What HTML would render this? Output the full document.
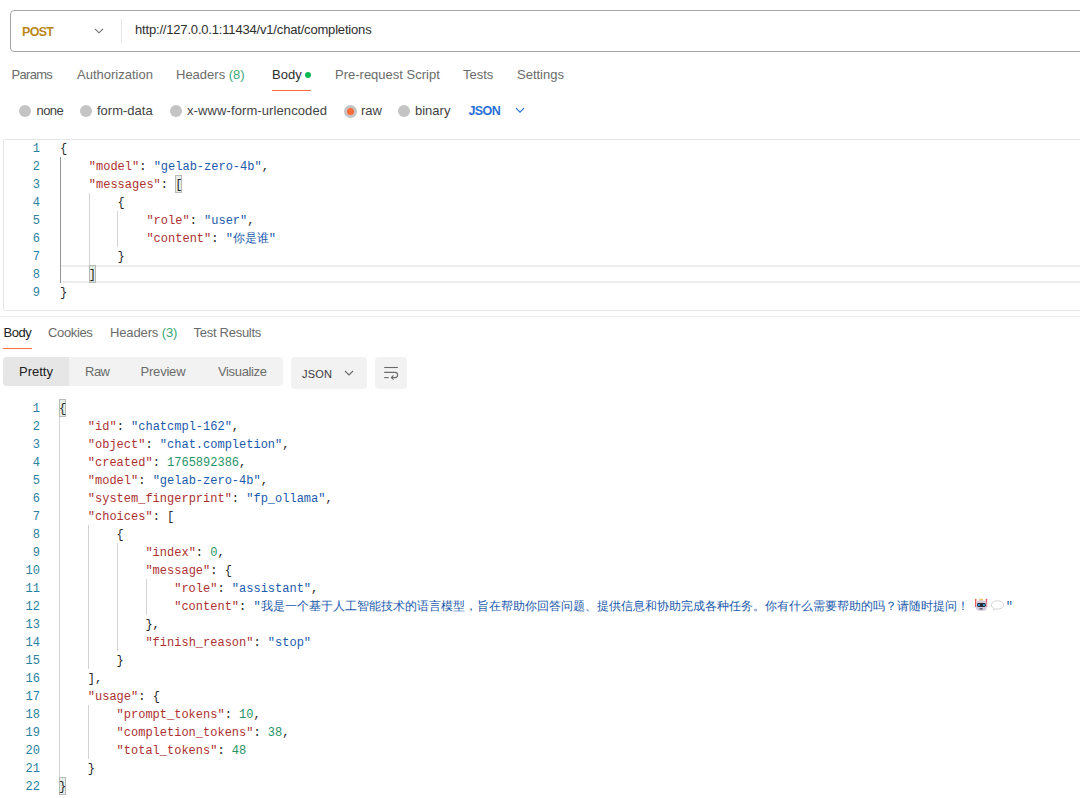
<!DOCTYPE html>
<html><head><meta charset="utf-8">
<style>
*{margin:0;padding:0;box-sizing:border-box}
html,body{width:1080px;height:798px;overflow:hidden;background:#fff}
body{position:relative;font-family:"Liberation Sans",sans-serif;font-size:13px;color:#212121}
.a{position:absolute;white-space:nowrap;line-height:16px}
.urlbox{position:absolute;left:10px;top:10px;width:1100px;height:42px;border:1px solid #a6a6a6;border-radius:4px}
.post{left:22px;top:23.5px;color:#bb8718;font-weight:700;font-size:12.5px;letter-spacing:-0.7px}
.divv{position:absolute;left:121px;top:19px;width:1px;height:24px;background:#e6e6e6}
.url{left:135px;top:21.5px;color:#2e2e2e;letter-spacing:-0.18px}
.tab{top:66.5px;color:#6b6b6b}
.tab .g{color:#3aa775}
.radio{position:absolute;top:105px;width:12px;height:12px;border-radius:50%;background:#c4c4c4}
.rl{top:102.5px;color:#444}
.ed{position:absolute;left:3px;top:139px;width:1100px;height:172px;border:1px solid #e6e6e6;border-radius:1.5px}
.sep{position:absolute;left:0;top:316px;width:1080px;height:1px;background:#ececec}
.code{position:absolute;left:0;font-family:"Liberation Mono",monospace;font-size:12px;line-height:18px;white-space:pre;color:#262626}
.ln{position:absolute;left:0;width:40px;text-align:right;font-family:"Liberation Mono",monospace;font-size:12px;line-height:18px;color:#2a80a0;white-space:pre}
.k{color:#ad3030}.s{color:#1a5aad}.n{color:#1f9468}
.guide{position:absolute;width:1px;background:#d3d3d3}
.bm{position:absolute;width:7px;height:18px;background:rgba(0,100,0,.1);border:1px solid #b9b9b9}
.cjk{display:inline-block;overflow:hidden;vertical-align:top;position:relative;top:-1px;height:18px;white-space:nowrap;font-family:"Liberation Sans",sans-serif;font-size:12px}
.c{display:inline-block;width:12px;font-style:normal;text-align:left;overflow:hidden;vertical-align:top}
.rtab{top:325px;color:#6b6b6b}
.seg{position:absolute;top:357px;height:29px;background:#f2f2f2;border-radius:4px}
.btn{position:absolute;top:357px;height:32px;background:#f2f2f2;border-radius:4px}
</style></head><body>
<div class="urlbox"></div>
<div class="a post">POST</div>
<svg style="position:absolute;left:94px;top:28px" width="10" height="6" viewBox="0 0 10 6"><path d="M1 0.8 L5 4.8 L9 0.8" fill="none" stroke="#6b6b6b" stroke-width="1.1"/></svg>
<div class="divv"></div>
<div class="a url">http://127.0.0.1:11434/v1/chat/completions</div>

<div class="a tab" style="left:11.5px;letter-spacing:-0.7px">Params</div>
<div class="a tab" style="left:77px">Authorization</div>
<div class="a tab" style="left:176px">Headers <span class="g">(8)</span></div>
<div class="a tab" style="left:272px;color:#2e2e2e">Body</div>
<div style="position:absolute;left:305px;top:71.5px;width:6px;height:6px;border-radius:50%;background:#0cbb52"></div>
<div style="position:absolute;left:272px;top:89.5px;width:39px;height:1.5px;background:#ff6c37"></div>
<div class="a tab" style="left:335px">Pre-request Script</div>
<div class="a tab" style="left:463px">Tests</div>
<div class="a tab" style="left:517px">Settings</div>

<div class="radio" style="left:19px"></div>
<div class="a rl" style="left:36.5px;letter-spacing:-0.6px">none</div>
<div class="radio" style="left:80px"></div>
<div class="a rl" style="left:97px">form-data</div>
<div class="radio" style="left:169.5px"></div>
<div class="a rl" style="left:187px;letter-spacing:0.1px">x-www-form-urlencoded</div>
<div class="radio" style="left:344px;top:104.5px;width:13px;height:13px"></div>
<div style="position:absolute;left:347px;top:107.5px;width:7px;height:7px;border-radius:50%;background:#ff6c37"></div>
<div class="a rl" style="left:361px">raw</div>
<div class="radio" style="left:398px"></div>
<div class="a rl" style="left:415px">binary</div>
<div class="a rl" style="left:468.5px;color:#2b6fd6;font-weight:700;font-size:12.5px;letter-spacing:-0.6px">JSON</div>
<svg style="position:absolute;left:515px;top:107px" width="10" height="7" viewBox="0 0 10 7"><path d="M1 1.2 L5 5.2 L9 1.2" fill="none" stroke="#2b6fd6" stroke-width="1.2"/></svg>

<!-- request editor -->
<div class="ed"></div>
<div style="position:absolute;left:60px;top:265px;width:1020px;height:18px;border-top:2px solid #eeeeee;border-bottom:2px solid #eeeeee"></div>
<div class="guide" style="left:60px;top:157px;height:126px;background:#939393"></div>
<div class="guide" style="left:89px;top:193px;height:72px"></div>
<div class="guide" style="left:117px;top:211px;height:36px"></div>
<div class="bm" style="left:175px;top:175px"></div>
<div class="bm" style="left:89px;top:265px"></div>
<div class="ln" style="top:140px">1
2
3
4
5
6
7
8
9</div>
<div class="code" style="left:60px;top:140px">{
    <span class="k">"model"</span>: <span class="s">"gelab-zero-4b"</span>,
    <span class="k">"messages"</span>: [
        {
            <span class="k">"role"</span>: <span class="s">"user"</span>,
            <span class="k">"content"</span>: <span class="s">"<span class="cjk" style="width:36px"><i class="c">你</i><i class="c">是</i><i class="c">谁</i></span>"</span>
        }
    ]
}</div>

<div class="sep"></div>
<div class="a rtab" style="left:3.5px;color:#212121;letter-spacing:-0.5px">Body</div>
<div style="position:absolute;left:3px;top:347.5px;width:29px;height:1.5px;background:#ff6c37"></div>
<div class="a rtab" style="left:48px;letter-spacing:-0.35px">Cookies</div>
<div class="a rtab" style="left:110px;letter-spacing:-0.13px">Headers <span style="color:#3aa775">(3)</span></div>
<div class="a rtab" style="left:193.5px;letter-spacing:-0.27px">Test Results</div>

<div class="seg" style="left:3px;width:280px"></div>
<div class="seg" style="left:3px;width:66px;background:#e6e6e6;border-radius:4px 0 0 4px"></div>
<div class="a" style="left:19px;top:364px;color:#212121">Pretty</div>
<div class="a" style="left:85px;top:364px;color:#6b6b6b;letter-spacing:-0.5px">Raw</div>
<div class="a" style="left:140.5px;top:364px;color:#6b6b6b;letter-spacing:-0.2px">Preview</div>
<div class="a" style="left:218px;top:364px;color:#6b6b6b;letter-spacing:-0.35px">Visualize</div>
<div class="btn" style="left:291px;width:76px"></div>
<div class="a" style="left:302px;top:365.5px;color:#3b3b3b;font-size:11px;letter-spacing:0.2px">JSON</div>
<svg style="position:absolute;left:344px;top:370px" width="10" height="7" viewBox="0 0 10 7"><path d="M1 1 L5 5 L9 1" fill="none" stroke="#6b6b6b" stroke-width="1.1"/></svg>
<div class="btn" style="left:375px;width:32px"></div>
<svg style="position:absolute;left:378px;top:360px" width="26" height="26" viewBox="0 0 26 26"><g fill="none" stroke="#6b6b6b" stroke-width="1.1"><path d="M6.2 7.5 H19.9"/><path d="M6.2 12.4 H17 A2.6 2.6 0 0 1 17 17.6 H13.6"/><path d="M6.2 17.6 H10.7"/><path d="M15.5 15.4 L13.4 17.6 L15.5 19.7"/></g></svg>

<!-- response editor -->
<div class="guide" style="left:59px;top:417px;height:360px"></div>
<div class="guide" style="left:88px;top:525px;height:144px"></div>
<div class="guide" style="left:88px;top:705px;height:54px"></div>
<div class="guide" style="left:117px;top:543px;height:108px"></div>
<div class="guide" style="left:146px;top:579px;height:36px"></div>
<div class="bm" style="left:59px;top:399px"></div>
<div class="bm" style="left:59px;top:777px"></div>
<div class="ln" style="top:400px">1
2
3
4
5
6
7
8
9
10
11
12
13
14
15
16
17
18
19
20
21
22</div>
<div class="code" style="left:59px;top:400px">{
    <span class="k">"id"</span>: <span class="s">"chatcmpl-162"</span>,
    <span class="k">"object"</span>: <span class="s">"chat.completion"</span>,
    <span class="k">"created"</span>: <span class="n">1765892386</span>,
    <span class="k">"model"</span>: <span class="s">"gelab-zero-4b"</span>,
    <span class="k">"system_fingerprint"</span>: <span class="s">"fp_ollama"</span>,
    <span class="k">"choices"</span>: [
        {
            <span class="k">"index"</span>: <span class="n">0</span>,
            <span class="k">"message"</span>: {
                <span class="k">"role"</span>: <span class="s">"assistant"</span>,
                <span class="k">"content"</span>: <span class="s">"<span class="cjk" style="width:707px"><i class="c">我</i><i class="c">是</i><i class="c">一</i><i class="c">个</i><i class="c">基</i><i class="c">于</i><i class="c">人</i><i class="c">工</i><i class="c">智</i><i class="c">能</i><i class="c">技</i><i class="c">术</i><i class="c">的</i><i class="c">语</i><i class="c">言</i><i class="c">模</i><i class="c">型</i><i class="c">，</i><i class="c">旨</i><i class="c">在</i><i class="c">帮</i><i class="c">助</i><i class="c">你</i><i class="c">回</i><i class="c">答</i><i class="c">问</i><i class="c">题</i><i class="c">、</i><i class="c">提</i><i class="c">供</i><i class="c">信</i><i class="c">息</i><i class="c">和</i><i class="c">协</i><i class="c">助</i><i class="c">完</i><i class="c">成</i><i class="c">各</i><i class="c">种</i><i class="c">任</i><i class="c">务</i><i class="c">。</i><i class="c">你</i><i class="c">有</i><i class="c">什</i><i class="c">么</i><i class="c">需</i><i class="c">要</i><i class="c">帮</i><i class="c">助</i><i class="c">的</i><i class="c">吗</i><i class="c">？</i><i class="c">请</i><i class="c">随</i><i class="c">时</i><i class="c">提</i><i class="c">问</i><i class="c">！</i></span> <span style="display:inline-block;width:16px;height:18px;vertical-align:top;position:relative"><svg style="position:absolute;left:-1px;top:-1px" width="16" height="18" viewBox="0 0 16 18"><rect x="1" y="1.8" width="1.4" height="8.2" rx="0.5" fill="#ee5a5a"/><rect x="11.8" y="1.8" width="1.4" height="8.2" rx="0.5" fill="#ee5a5a"/><rect x="5.2" y="1.8" width="4" height="2" rx="0.6" fill="#f5c56c"/><rect x="2" y="3.4" width="10.6" height="10.4" rx="3.2" fill="#d2cbe0"/><rect x="3" y="6" width="8.8" height="4" rx="1.4" fill="#2a2a33"/><rect x="3.9" y="7" width="1.9" height="2" rx="0.5" fill="#35a8ee"/><rect x="9" y="7" width="1.9" height="2" rx="0.5" fill="#35a8ee"/><rect x="5.5" y="11.2" width="3.2" height="1.3" rx="0.4" fill="#444"/></svg></span><span style="display:inline-block;width:15px;height:18px;vertical-align:top;position:relative"><svg style="position:absolute;left:0;top:0" width="16" height="18" viewBox="0 0 16 18"><path d="M6.5 2.8 C10.2 2.8 12.6 4.6 12.6 7 C12.6 9.4 10.2 11 6.5 11 C5.8 11 5.2 10.9 4.6 10.8 L2.6 12.2 L3 10.2 C1.4 9.5 0.4 8.4 0.4 7 C0.4 4.6 2.8 2.8 6.5 2.8 Z" fill="none" stroke="#cfcfcf" stroke-width="0.9"/></svg></span>"</span>
            },
            <span class="k">"finish_reason"</span>: <span class="s">"stop"</span>
        }
    ],
    <span class="k">"usage"</span>: {
        <span class="k">"prompt_tokens"</span>: <span class="n">10</span>,
        <span class="k">"completion_tokens"</span>: <span class="n">38</span>,
        <span class="k">"total_tokens"</span>: <span class="n">48</span>
    }
}</div>
</body></html>
